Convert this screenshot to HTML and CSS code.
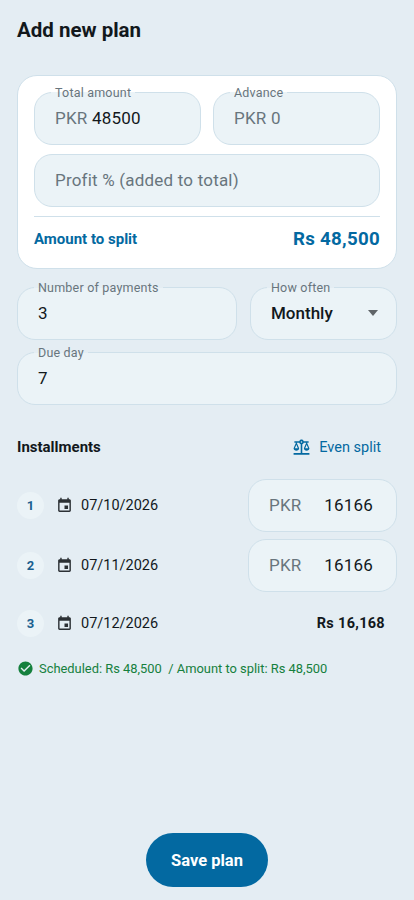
FILE: index.html
```html
<!DOCTYPE html>
<html lang="en">
  <head>
    <meta charset="UTF-8" />
    <title>Add new plan</title>
    <link rel="stylesheet" href="styles.css">
  </head>
  <body>
    <h1 class="title">Add new plan</h1>

    <!-- Amounts -->
    <div class="card">
      <div class="row row-card">
        <div class="field field-half on-card">
          <span class="float-label">Total amount</span>
          <span class="hint">PKR</span>&nbsp;<span class="value">48500</span>
        </div>
        <div class="field field-half on-card">
          <span class="float-label">Advance</span>
          <span class="hint">PKR 0</span>
        </div>
      </div>
      <div class="field on-card">
        <span class="hint">Profit % (added to total)</span>
      </div>
      <div class="total">
        <span class="total-label">Amount to split</span>
        <span class="total-value">Rs 48,500</span>
      </div>
    </div>

    <!-- Schedule -->
    <div class="schedule">
      <div class="row">
        <div class="field field-payments">
          <span class="float-label">Number of payments</span>
          <span class="value">3</span>
        </div>
        <div class="field field-often">
          <span class="float-label">How often</span>
          <span class="value value-strong">Monthly</span>
          <span class="caret"></span>
        </div>
      </div>
      <div class="field">
        <span class="float-label">Due day</span>
        <span class="value">7</span>
      </div>
    </div>

    <!-- Installments -->
    <div class="section-head">
      <h2>Installments</h2>
      <div class="even-split">
        <svg class="icon-balance" viewBox="0 0 24 24"><path d="M13 7.83c.85-.3 1.53-.98 1.83-1.83H18l-3 7c0 1.66 1.57 3 3.5 3s3.5-1.34 3.5-3l-3-7h2V4h-6.17c-.41-1.17-1.52-2-2.83-2s-2.42.83-2.83 2H3v2h2l-3 7c0 1.66 1.57 3 3.5 3S9 14.66 9 13L6 6h3.17c.3.85.98 1.53 1.83 1.83V19H2v2h20v-2h-9V7.83zM20.37 13h-3.74l1.87-4.36L20.37 13zm-13 0H3.63L5.5 8.64 7.37 13zM12 6c-.55 0-1-.45-1-1s.45-1 1-1 1 .45 1 1-.45 1-1 1z"/></svg>
        <span>Even split</span>
      </div>
    </div>

    <div class="installments">
      <div class="installment">
        <span class="num">1</span>
        <svg class="icon-date" viewBox="0 0 24 24"><path d="M17 12h-5v5h5v-5zM16 1v2H8V1H6v2H5c-1.11 0-1.99.9-1.99 2L3 19c0 1.1.89 2 2 2h14c1.1 0 2-.9 2-2V5c0-1.1-.9-2-2-2h-1V1h-2zm3 18H5V8h14v11z"/></svg>
        <span class="date">07/10/2026</span>
        <div class="field field-amount">
          <span class="hint">PKR</span>
          <span class="value">16166</span>
        </div>
      </div>
      <div class="installment">
        <span class="num">2</span>
        <svg class="icon-date" viewBox="0 0 24 24"><path d="M17 12h-5v5h5v-5zM16 1v2H8V1H6v2H5c-1.11 0-1.99.9-1.99 2L3 19c0 1.1.89 2 2 2h14c1.1 0 2-.9 2-2V5c0-1.1-.9-2-2-2h-1V1h-2zm3 18H5V8h14v11z"/></svg>
        <span class="date">07/11/2026</span>
        <div class="field field-amount">
          <span class="hint">PKR</span>
          <span class="value">16166</span>
        </div>
      </div>
      <div class="installment installment-last">
        <span class="num">3</span>
        <svg class="icon-date" viewBox="0 0 24 24"><path d="M17 12h-5v5h5v-5zM16 1v2H8V1H6v2H5c-1.11 0-1.99.9-1.99 2L3 19c0 1.1.89 2 2 2h14c1.1 0 2-.9 2-2V5c0-1.1-.9-2-2-2h-1V1h-2zm3 18H5V8h14v11z"/></svg>
        <span class="date">07/12/2026</span>
        <span class="last-amount">Rs 16,168</span>
      </div>
    </div>

    <div class="status">
      <svg class="icon-check" viewBox="0 0 24 24"><path d="M12 2C6.48 2 2 6.48 2 12s4.48 10 10 10 10-4.48 10-10S17.52 2 12 2zm-2 15l-5-5 1.41-1.41L10 14.17l7.59-7.59L19 8l-9 9z"/></svg>
      <span>Scheduled: Rs 48,500 &nbsp;/ Amount to split: Rs 48,500</span>
    </div>

    <button class="save-btn">Save plan</button>
  </body>
</html>
```

FILE: styles.css
```css
* {
  box-sizing: border-box;
}

body {
  margin: 0;
  height: 900px;
  padding: 0 17px 13px;
  display: flex;
  flex-direction: column;
  font-family: Roboto, "Noto Sans", sans-serif;
  background: #e4edf3;
  color: #12181c;
}

.title {
  margin: 17px 0 0;
  font-size: 20.5px;
  line-height: 26px;
  font-weight: 700;
}

.card {
  margin-top: 32px;
  height: 194px;
  padding: 16px 16px 0;
  background: #fff;
  border: 1px solid #cfe0ea;
  border-radius: 20px;
}

.card > .field {
  margin-top: 9px;
}

.row {
  display: flex;
  gap: 13px;
}

.row-card {
  gap: 12px;
}

.field {
  position: relative;
  display: flex;
  align-items: center;
  height: 53px;
  padding: 0 20px 2px;
  background: #ebf3f7;
  border: 1px solid #cfe0ea;
  border-radius: 18px;
  font-size: 17px;
  letter-spacing: 0.2px;
  white-space: pre;
}

.field-half {
  flex: 1;
}

.float-label {
  position: absolute;
  top: -8px;
  left: 16px;
  padding: 0 4px;
  font-size: 12.5px;
  line-height: 15px;
  letter-spacing: 0.2px;
  color: #68757d;
  background: linear-gradient(#e4edf3 50%, #ebf3f7 50%);
}

.on-card .float-label {
  background: linear-gradient(#fff 50%, #ebf3f7 50%);
}

.hint {
  color: #68757d;
}

.value {
  color: #12181c;
}

.value-strong {
  font-weight: 500;
  letter-spacing: 0;
}

.total {
  display: flex;
  justify-content: space-between;
  align-items: center;
  margin-top: 9px;
  height: 45px;
  border-top: 1px solid #cfe0ea;
  color: #0369a1;
  font-weight: 700;
}

.total-label {
  font-size: 15px;
}

.total-value {
  font-size: 18.7px;
  letter-spacing: 0.3px;
}

.schedule {
  margin-top: 18px;
}

.schedule > .field {
  margin-top: 12px;
}

.field-payments {
  width: 220px;
}

.field-often {
  flex: 1;
  justify-content: space-between;
}

.caret {
  width: 0;
  height: 0;
  margin-right: -2px;
  border-left: 5.5px solid transparent;
  border-right: 5.5px solid transparent;
  border-top: 6px solid #5f6468;
}

.section-head {
  display: flex;
  justify-content: space-between;
  align-items: center;
  margin-top: 28px;
  height: 28px;
  padding-right: 16px;
}

.section-head h2 {
  margin: 0;
  font-size: 15px;
  font-weight: 700;
}

.even-split {
  display: flex;
  align-items: center;
  gap: 8px;
  font-size: 14.5px;
  color: #0369a1;
}

.icon-balance {
  width: 19px;
  height: 19px;
  fill: #0369a1;
}

.installments {
  margin-top: 18px;
}

.installment {
  display: flex;
  align-items: center;
  height: 53px;
  margin-bottom: 7px;
}

.installment-last {
  height: 48px;
  margin-bottom: 0;
  padding-right: 12px;
}

.num {
  display: flex;
  align-items: center;
  justify-content: center;
  width: 27px;
  height: 27px;
  border-radius: 50%;
  background: #ebf3f7;
  color: #1a5f8f;
  font-size: 13px;
  font-weight: 700;
}

.icon-date {
  width: 17px;
  height: 17px;
  margin-left: 12px;
  fill: #2b3034;
}

.date {
  margin-left: 8px;
  font-size: 14.5px;
}

.field-amount {
  margin-left: auto;
  width: 149px;
  justify-content: space-between;
  padding-right: 23px;
}

.last-amount {
  margin-left: auto;
  font-size: 14.5px;
  font-weight: 700;
  letter-spacing: 0.3px;
}

.status {
  display: flex;
  align-items: center;
  gap: 5px;
  margin-top: 9px;
  height: 24px;
  font-size: 12.9px;
  color: #15803d;
  white-space: pre;
}

.icon-check {
  width: 17px;
  height: 17px;
  fill: #15803d;
}

.save-btn {
  margin: auto auto 0;
  width: 122px;
  height: 54px;
  border: none;
  border-radius: 27px;
  background: #0369a1;
  color: #fff;
  font-family: inherit;
  font-size: 16.5px;
  font-weight: 700;
  cursor: pointer;
}
```
